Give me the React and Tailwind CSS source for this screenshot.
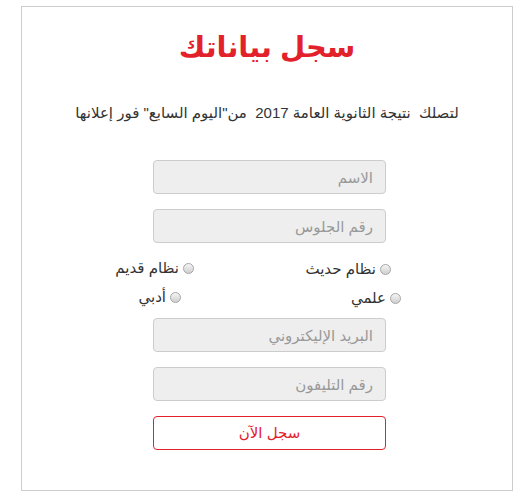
const font = { fontFamily: '"Liberation Sans", "DejaVu Sans", sans-serif' };

function Field({ placeholder, className = "" }) {
  return (
    <input
      type="text"
      placeholder={placeholder}
      className={`block w-[233px] h-[34px] bg-[#eeeeee] border border-[#cccccc] rounded-[4px] px-[12px] text-[15px] text-[#555] placeholder:text-[#999] text-right outline-none ${className}`}
    />
  );
}

function Radio({ label }) {
  return (
    <label className="flex items-center gap-[4px] text-[15px] text-[#333]">
      <span className="w-[11px] h-[11px] rounded-full border border-[#a5a5a5] bg-gradient-to-b from-[#f5f5f5] to-[#cfcfcf] shrink-0" />
      <span>{label}</span>
    </label>
  );
}

export default function App() {
  return (
    <div className="min-h-screen bg-white pt-[6px] pl-[21px]" style={font}>
      <div dir="rtl" className="w-[492px] h-[485px] border border-[#cccccc]">
        <h1 className="text-center text-[#e3212b] text-[29px] font-bold leading-[40px] mt-[20px]">
          سجل بياناتك
        </h1>

        <p className="text-center text-[15px] text-[#333] leading-[20px] mt-[36px]">
          لتصلك&nbsp; نتيجة الثانوية العامة 2017&nbsp; من"اليوم السابع" فور إعلانها
        </p>

        <div className="mr-[126px] mt-[37px]">
          <Field placeholder="الاسم" />
          <Field placeholder="رقم الجلوس" className="mt-[15px]" />
        </div>

        <div className="flex mr-[121px] mt-[15px] h-[20px]">
          <div className="w-[197px]">
            <Radio label="نظام حديث" />
          </div>
          <Radio label="نظام قديم" />
        </div>

        <div className="flex mr-[111px] mt-[9px] h-[20px]">
          <div className="w-[220px]">
            <Radio label="علمي" />
          </div>
          <Radio label="أدبي" />
        </div>

        <div className="mr-[126px] mt-[11px]">
          <Field placeholder="البريد الإليكتروني" />
          <Field placeholder="رقم التليفون" className="mt-[15px]" />
          <button
            type="button"
            className="block w-[233px] h-[34px] mt-[15px] border border-[#e3212b] rounded-[4px] bg-white text-[#e3212b] text-[15px]"
          >
            سجل الآن
          </button>
        </div>
      </div>
    </div>
  );
}
